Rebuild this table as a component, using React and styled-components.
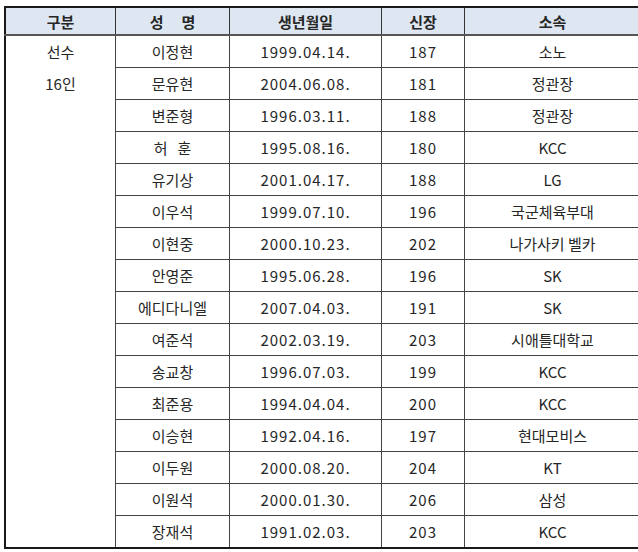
import styled, { createGlobalStyle } from "styled-components";

const GlobalStyle = createGlobalStyle`
  body {
    margin: 0;
    background: #fff;
    font-family: "Noto Sans CJK KR", "Noto Sans", sans-serif;
  }
`;

const Page = styled.div`
  padding: 6px 0 0 4px;
`;

const Table = styled.table`
  border-collapse: collapse;
  table-layout: fixed;
  width: 631px;
  border: 2px solid #1a1a1a;
  color: #262626;
  font-size: 15px;
`;

const HeadCell = styled.th`
  width: ${(p) => p.$w}px;
  height: 26px;
  padding: 0;
  background: #dde6f1;
  border: 1px solid #333;
  border-bottom: 2px solid #555;
  font-weight: 700;
  text-align: center;
  letter-spacing: ${(p) => (p.$spread ? "18px" : "0")};
  text-indent: ${(p) => (p.$spread ? "18px" : "0")};
`;

const Cell = styled.td`
  height: 31px;
  padding: 0;
  border: 1px solid #444;
  text-align: center;
  vertical-align: middle;
  white-space: pre;
  letter-spacing: ${(p) => (p.$num ? "1px" : "0")};
`;

const GroupCell = styled.td`
  padding: 0;
  border: 1px solid #444;
  text-align: center;
  vertical-align: top;
  line-height: 32px;
`;

const players = [
  ["이정현", "1999.04.14.", "187", "소노"],
  ["문유현", "2004.06.08.", "181", "정관장"],
  ["변준형", "1996.03.11.", "188", "정관장"],
  ["허   훈", "1995.08.16.", "180", "KCC"],
  ["유기상", "2001.04.17.", "188", "LG"],
  ["이우석", "1999.07.10.", "196", "국군체육부대"],
  ["이현중", "2000.10.23.", "202", "나가사키 벨카"],
  ["안영준", "1995.06.28.", "196", "SK"],
  ["에디다니엘", "2007.04.03.", "191", "SK"],
  ["여준석", "2002.03.19.", "203", "시애틀대학교"],
  ["송교창", "1996.07.03.", "199", "KCC"],
  ["최준용", "1994.04.04.", "200", "KCC"],
  ["이승현", "1992.04.16.", "197", "현대모비스"],
  ["이두원", "2000.08.20.", "204", "KT"],
  ["이원석", "2000.01.30.", "206", "삼성"],
  ["장재석", "1991.02.03.", "203", "KCC"],
];

export default function App() {
  return (
    <Page>
      <GlobalStyle />
      <Table>
        <thead>
          <tr>
            <HeadCell $w={109}>구분</HeadCell>
            <HeadCell $w={113} $spread>
              성명
            </HeadCell>
            <HeadCell $w={151}>생년월일</HeadCell>
            <HeadCell $w={82}>신장</HeadCell>
            <HeadCell $w={175}>소속</HeadCell>
          </tr>
        </thead>
        <tbody>
          {players.map((p, i) => (
            <tr key={i}>
              {i === 0 && (
                <GroupCell rowSpan={players.length}>
                  선수
                  <br />
                  16인
                </GroupCell>
              )}
              {p.map((v, j) => (
                <Cell key={j} $num={j === 1 || j === 2}>
                  {v}
                </Cell>
              ))}
            </tr>
          ))}
        </tbody>
      </Table>
    </Page>
  );
}
